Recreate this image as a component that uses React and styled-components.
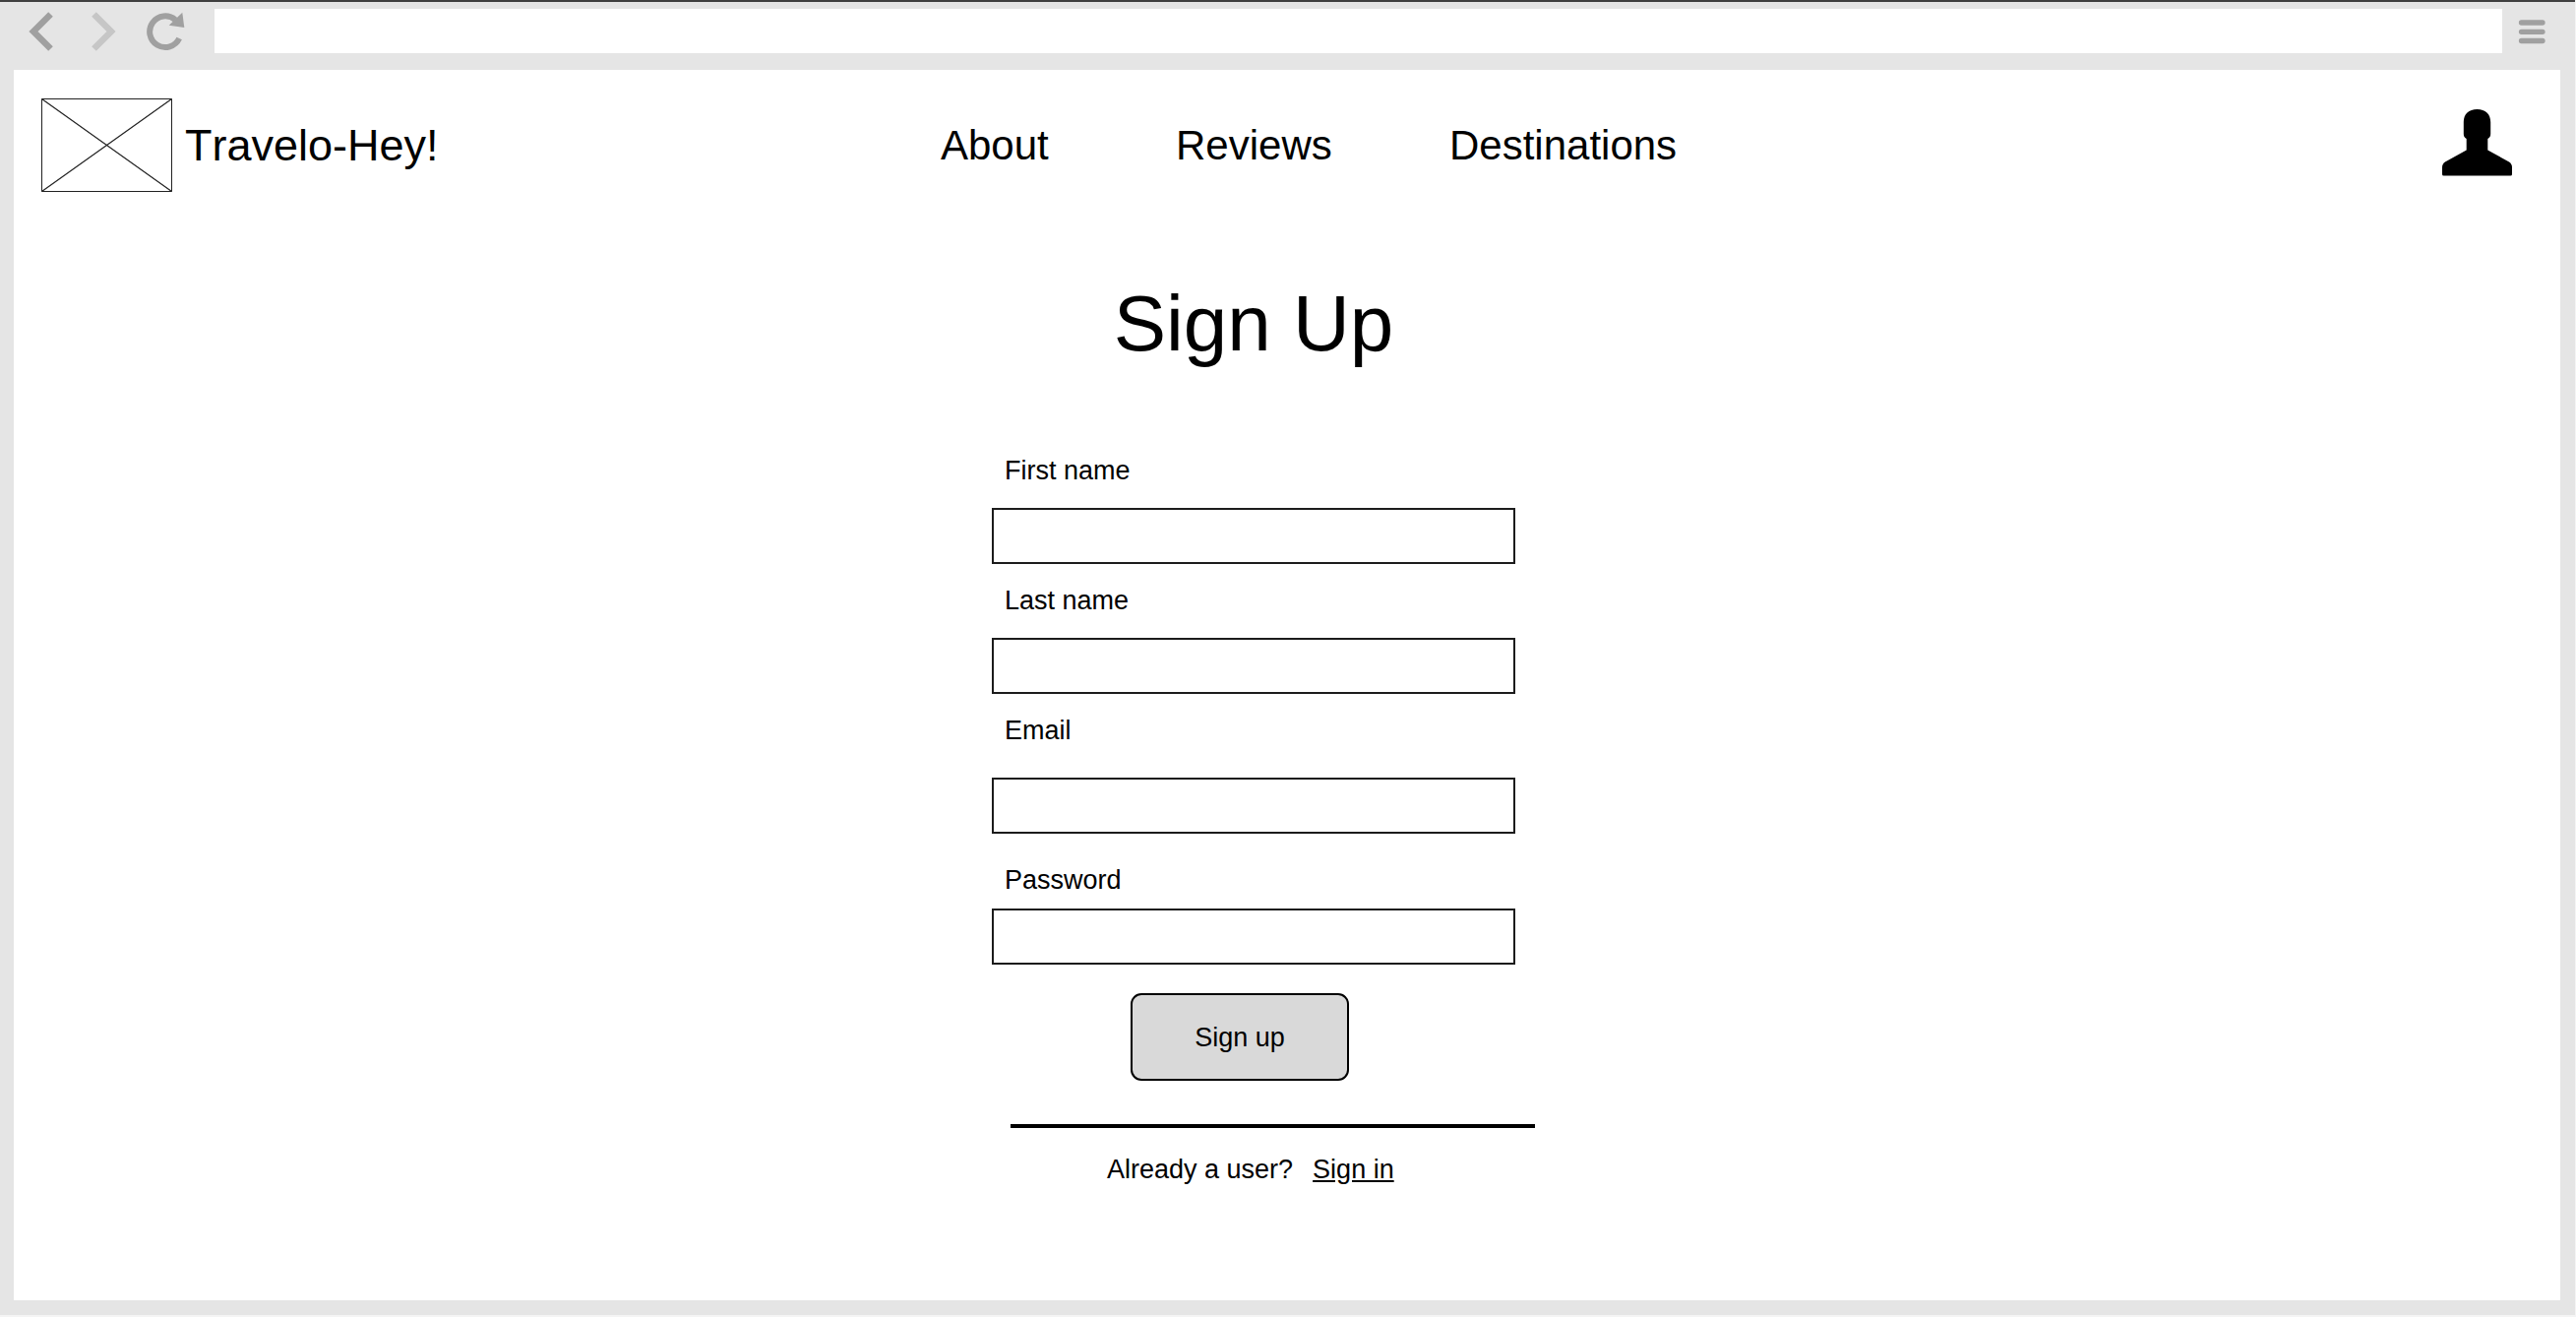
import React from "react";
import styled, { createGlobalStyle } from "styled-components";

const GlobalStyle = createGlobalStyle`
  * { box-sizing: border-box; }
  body {
    margin: 0;
    background: #f4f4f4;
    color: #000;
    font-family: "Liberation Sans", Arial, Helvetica, sans-serif;
    font-size: 27px;
    font-kerning: none;
    line-height: 32px;
  }
`;

const Browser = styled.div`
  display: flex;
  flex-direction: column;
  min-height: calc(100vh - 2px);
  margin-right: 1px;
  padding: 0 15px 15px 14px;
  border-top: 2px solid #404040;
  background: #e5e5e5;
`;

const Toolbar = styled.div`
  display: flex;
  align-items: center;
  height: 69px;
  padding: 7px 15px 17px 15px;
`;

const ToolButton = styled.button`
  display: flex;
  margin: 0 ${(p) => p.$after}px 0 0;
  padding: 0;
  border: 0;
  background: none;
  color: ${(p) => (p.$dim ? "#c6c6c6" : "#a0a0a0")};
`;

const AddressBar = styled.input`
  flex: 1;
  min-width: 0;
  height: 45px;
  margin-right: 16px;
  padding: 0 16px;
  border: 0;
  background: #fff;
  font: inherit;
`;

const Page = styled.div`
  flex: 1;
  background: #fff;
`;

const Header = styled.header`
  display: grid;
  grid-template-columns: minmax(auto, 914px) 1fr auto;
  align-items: center;
  padding: 29px 49px 0 28px;
`;

const Brand = styled.a`
  display: flex;
  align-items: center;
  gap: 13px;
  color: inherit;
  font-size: 45px;
  line-height: 52px;
  text-decoration: none;
`;

const Nav = styled.nav`
  display: grid;
  grid-template-columns: 239px 278px auto;
  justify-content: start;
`;

const NavLink = styled.a`
  color: inherit;
  font-size: 42px;
  line-height: 46px;
  text-decoration: none;
`;

const Account = styled.a`
  display: flex;
  color: inherit;
`;

const Main = styled.main`
  display: flex;
  flex-direction: column;
  align-items: center;
  padding: 88px 68px 24px 0;
`;

const Title = styled.h1`
  margin: 0;
  font-size: 80px;
  font-weight: 400;
  line-height: 92px;
`;

const Form = styled.form`
  display: flex;
  flex-direction: column;
  width: 532px;
  max-width: 100%;
  margin-top: 87px;
`;

const Field = styled.div`
  display: flex;
  flex-direction: column;
  gap: ${(p) => p.$gap}px;
  margin-bottom: ${(p) => p.$after}px;
`;

const Label = styled.label`
  padding-left: 13px;
`;

const TextInput = styled.input`
  width: 100%;
  height: 57px;
  padding: 0 12px;
  border: 2px solid #1c1c1c;
  border-radius: 0;
  background: #fff;
  font: inherit;
`;

const SubmitButton = styled.button`
  width: 222px;
  height: 89px;
  margin-left: 141px;
  padding: 0;
  border: 2px solid #000;
  border-radius: 11px;
  background: #d9d9d9;
  color: inherit;
  font: inherit;
`;

const Divider = styled.hr`
  width: 533px;
  height: 4px;
  margin: 44px 0 26px 19px;
  border: 0;
  background: #000;
`;

const SignInPrompt = styled.p`
  display: flex;
  gap: 20px;
  margin: 0;
  padding-left: 117px;
`;

const SignInLink = styled.a`
  color: inherit;
`;

const fields = [
  { id: "first-name", label: "First name", type: "text", gap: 22, after: 21 },
  { id: "last-name", label: "Last name", type: "text", gap: 22, after: 21 },
  { id: "email", label: "Email", type: "email", gap: 32, after: 31 },
  { id: "password", label: "Password", type: "password", gap: 13, after: 29 },
];

export default function App() {
  return (
    <>
      <GlobalStyle />
      <Browser>
        <Toolbar>
          <ToolButton type="button" aria-label="Back" $after={38}>
            <svg width="26" height="42" viewBox="0 0 26 42">
              <path d="M22.5 3.5 5 21l17.5 17.5" fill="none" stroke="currentColor" strokeWidth="6.5" />
            </svg>
          </ToolButton>
          <ToolButton type="button" aria-label="Forward" $dim $after={30}>
            <svg width="26" height="42" viewBox="0 0 26 42">
              <path d="M2.5 3.5 20 21 2.5 38.5" fill="none" stroke="currentColor" strokeWidth="6.5" />
            </svg>
          </ToolButton>
          <ToolButton type="button" aria-label="Reload" $after={29}>
            <svg width="40" height="42" viewBox="0 0 40 42">
              <path d="M29.3 9.2A15.8 15.8 0 1 0 33.2 28" fill="none" stroke="currentColor" strokeWidth="6" />
              <path d="M36.3 1.8 38.3 17 22.7 14.8Z" fill="currentColor" />
            </svg>
          </ToolButton>
          <AddressBar type="text" aria-label="Address" />
          <ToolButton type="button" aria-label="Menu" $after={0}>
            <svg width="28" height="26" viewBox="0 0 28 26">
              <path d="M3.5 4h21.500M3.5 13.3h21.500M3.5 22.5h21.500" stroke="currentColor" strokeWidth="5.3" strokeLinecap="round" />
            </svg>
          </ToolButton>
        </Toolbar>
        <Page>
          <Header>
            <Brand href="#">
              <svg width="133" height="95" viewBox="0 0 133 95" fill="none" stroke="#222">
                <path d="M.5.5h132v94H.5z" />
                <path d="M.5.5l132 94M132.5.5.5 94.5" strokeWidth="1.2" />
              </svg>
              Travelo-Hey!
            </Brand>
            <Nav>
              <NavLink href="#about">About</NavLink>
              <NavLink href="#reviews">Reviews</NavLink>
              <NavLink href="#destinations">Destinations</NavLink>
            </Nav>
            <Account href="#account" aria-label="Account">
              <svg width="71" height="74" viewBox="0 0 71 74">
                <path
                  d="M35.5 0C44 0 49.2 5 49.2 13V25C49.2 27.5 48.3 28.8 46.3 30V41.5L68 53.5Q71 55.5 71 59V66Q71 67.5 69.5 67.5H1.5Q0 67.5 0 66V59Q0 55.5 3 53.5L24.7 41.5V30C22.7 28.8 21.8 27.5 21.8 25V13C21.8 5 27 0 35.5 0Z"
                  fill="currentColor"
                />
              </svg>
            </Account>
          </Header>
          <Main>
            <Title>Sign Up</Title>
            <Form onSubmit={(e) => e.preventDefault()}>
              {fields.map((f) => (
                <Field key={f.id} $gap={f.gap} $after={f.after}>
                  <Label htmlFor={f.id}>{f.label}</Label>
                  <TextInput id={f.id} name={f.id} type={f.type} />
                </Field>
              ))}
              <SubmitButton type="submit">Sign up</SubmitButton>
              <Divider />
              <SignInPrompt>
                Already a user?
                <SignInLink href="#sign-in">Sign in</SignInLink>
              </SignInPrompt>
            </Form>
          </Main>
        </Page>
      </Browser>
    </>
  );
}
